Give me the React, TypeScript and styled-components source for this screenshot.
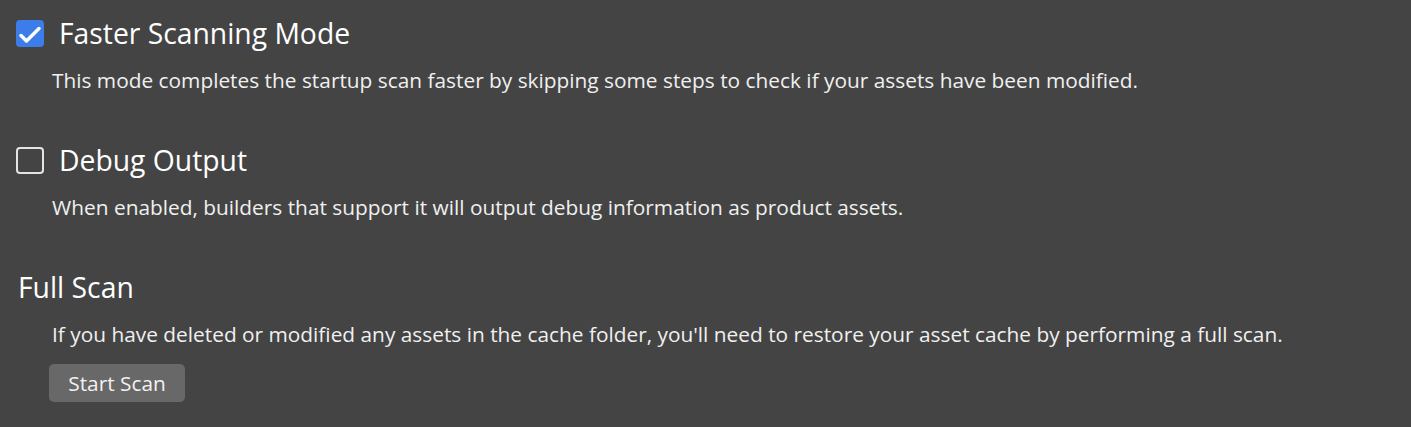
import styled, {createGlobalStyle} from "styled-components";
import {useState} from "react";

const GlobalStyle = createGlobalStyle`
  html, body {
    margin: 0;
    padding: 0;
    background: #444444;
  }

  body {
    font-family: "Open Sans", "Noto Sans", sans-serif;
    color: #f2f2f2;
  }
`;

const Page = styled.div`
  display: flex;
  flex-direction: column;
  padding: 16px 0 0 16px;
  height: 427px;
  box-sizing: border-box;
`;

const Option = styled.div`
  display: flex;
  flex-direction: column;
  margin-bottom: 49px;
`;

const OptionHeader = styled.label`
  display: flex;
  align-items: center;
  gap: 15px;
  height: 34px;
  cursor: pointer;
`;

const Box = styled.span<{ $checked: boolean }>`
  display: flex;
  align-items: center;
  justify-content: center;
  width: 28px;
  height: 27px;
  box-sizing: border-box;
  border-radius: 4px;
  background: ${p => p.$checked ? "#3c7de9" : "transparent"};
  border: 2px solid ${p => p.$checked ? "#3c7de9" : "#e4e4e4"};
`;

const Title = styled.span`
  font-size: 28.3px;
  color: #ffffff;
`;

const Description = styled.p`
  margin: 16px 0 0 36px;
  font-size: 20.85px;
  line-height: 28px;
  color: #f0f0f0;
`;

const SectionTitle = styled.h3`
  margin: 0 0 0 2px;
  font-size: 28.3px;
  font-weight: normal;
  line-height: 34px;
  color: #ffffff;
`;

const Button = styled.button`
  align-self: flex-start;
  margin: 16px 0 0 33px;
  width: 136px;
  height: 38px;
  padding: 0;
  border: none;
  border-radius: 5px;
  background: #686868;
  color: #f2f2f2;
  font-family: "Open Sans", "Noto Sans", sans-serif;
  font-size: 20.85px;
`;

const Check = ({checked}: { checked: boolean }) => (
    <Box $checked={checked}>
        {checked && (
            <svg width="24" height="23" viewBox="2 2 24 23">
                <path d="M5 15.5 L10.5 21 L23 8.5" fill="none" stroke="#fff" strokeWidth="3.5"
                      strokeLinecap="round" strokeLinejoin="round"/>
            </svg>
        )}
    </Box>
);

const App = () => {
    const [fast, setFast] = useState(true);
    const [debug, setDebug] = useState(false);

    return (
        <Page>
            <GlobalStyle/>
            <Option>
                <OptionHeader onClick={() => setFast(!fast)}>
                    <Check checked={fast}/>
                    <Title>Faster Scanning Mode</Title>
                </OptionHeader>
                <Description>
                    This mode completes the startup scan faster by skipping some steps to check if your assets have been modified.
                </Description>
            </Option>
            <Option>
                <OptionHeader onClick={() => setDebug(!debug)}>
                    <Check checked={debug}/>
                    <Title>Debug Output</Title>
                </OptionHeader>
                <Description>
                    When enabled, builders that support it will output debug information as product assets.
                </Description>
            </Option>
            <SectionTitle>Full Scan</SectionTitle>
            <Description>
                If you have deleted or modified any assets in the cache folder, you'll need to restore your asset cache by performing a full scan.
            </Description>
            <Button>Start Scan</Button>
        </Page>
    );
}

export default App;
